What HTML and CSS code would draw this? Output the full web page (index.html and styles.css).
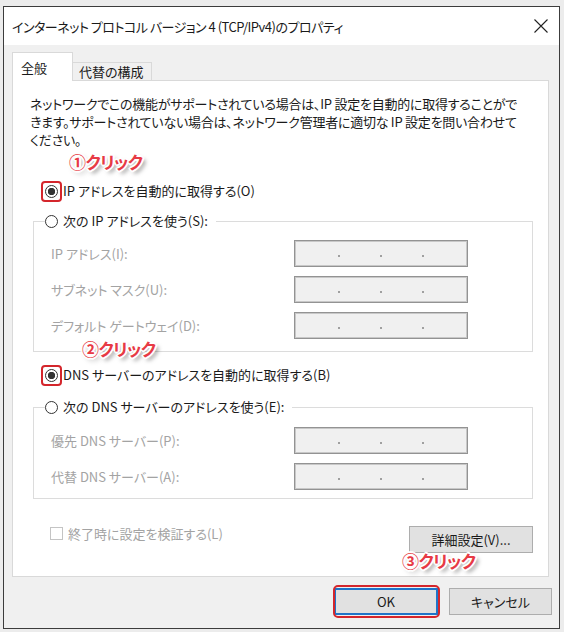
FILE: index.html
```html
<!DOCTYPE html>
<html lang="ja">
<head>
    <meta charset="UTF-8">
    <title>インターネット プロトコル バージョン 4 (TCP/IPv4)のプロパティ</title>
    <link rel="stylesheet" href="styles.css">
</head>
<body>
    <div class="window">
        <div class="titlebar">
            <span class="title">インターネット プロトコル バージョン 4 (TCP/IPv4)のプロパティ</span>
            <svg class="close" width="14" height="14" viewBox="0 0 14 14">
                <path d="M0.5 0.5 L13.5 13.5 M13.5 0.5 L0.5 13.5" stroke="#222" stroke-width="1.1" fill="none"/>
            </svg>
        </div>

        <div class="dialog">
            <div class="tabs">
                <div class="tab active">全般</div>
                <div class="tab">代替の構成</div>
            </div>

            <div class="panel">
                <p class="desc">ネットワークでこの機能がサポートされている場合は、IP 設定を自動的に取得することがで<br>きます。サポートされていない場合は、ネットワーク管理者に適切な IP 設定を問い合わせて<br>ください。</p>

                <label class="radio mark first"><span class="dot on"></span>IP アドレスを自動的に取得する(O)</label>

                <fieldset class="group group-ip">
                    <legend><span class="radio"><span class="dot"></span>次の IP アドレスを使う(S):</span></legend>
                    <div class="fields">
                        <div class="field"><span class="field-label">IP アドレス(I):</span><span class="ipbox"><i></i><i></i><i></i></span></div>
                        <div class="field"><span class="field-label">サブネット マスク(U):</span><span class="ipbox"><i></i><i></i><i></i></span></div>
                        <div class="field"><span class="field-label">デフォルト ゲートウェイ(D):</span><span class="ipbox"><i></i><i></i><i></i></span></div>
                    </div>
                </fieldset>

                <label class="radio mark second"><span class="dot on"></span>DNS サーバーのアドレスを自動的に取得する(B)</label>

                <fieldset class="group group-dns">
                    <legend><span class="radio"><span class="dot"></span>次の DNS サーバーのアドレスを使う(E):</span></legend>
                    <div class="fields">
                        <div class="field"><span class="field-label">優先 DNS サーバー(P):</span><span class="ipbox"><i></i><i></i><i></i></span></div>
                        <div class="field"><span class="field-label">代替 DNS サーバー(A):</span><span class="ipbox"><i></i><i></i><i></i></span></div>
                    </div>
                </fieldset>

                <div class="panel-foot">
                    <label class="check"><span class="box"></span>終了時に設定を検証する(L)</label>
                    <button class="btn btn-detail">詳細設定(V)...</button>
                </div>

                <!-- annotations drawn over the dialog -->
                <span class="note note-1">①クリック</span>
                <span class="note note-2">②クリック</span>
                <span class="note note-3">③クリック</span>
            </div>

            <div class="actions">
                <button class="btn btn-ok">OK</button>
                <button class="btn btn-cancel">キャンセル</button>
            </div>
        </div>
    </div>
</body>
</html>
```

FILE: styles.css
```css
* {
    box-sizing: border-box;
}

body {
    margin: 0;
    background: #ececec;
    font-family: "Noto Sans CJK JP", "Noto Sans", sans-serif;
    font-size: 13px;
    font-feature-settings: "palt" 1;
    color: #1a1a1a;
}

.window {
    width: 557px;
    height: 623px;
    margin: 6px 0 0 3px;
    border: 1px solid #3c3c3c;
    background: #f0f0f0;
    display: flex;
    flex-direction: column;
}

.titlebar {
    height: 38px;
    background: #fff;
    display: flex;
    align-items: center;
    justify-content: space-between;
    padding: 0 11px 0 8px;
}

.title {
    font-size: 13px;
    letter-spacing: -0.5px;
}

.dialog {
    flex: 1;
    padding: 7px 10px 0 8px;
}

.tabs {
    display: flex;
    align-items: flex-end;
    height: 28px;
}

.tab {
    height: 18px;
    width: 79px;
    padding-left: 6px;
    line-height: 17px;
    background: #f0f0f0;
    border: 1px solid #d9d9d9;
    border-left: none;
    border-bottom: none;
}

.tab.active {
    width: 61px;
    height: 29px;
    margin-bottom: -1px;
    padding: 6px 0 0 8px;
    background: #fff;
    border-left: 1px solid #d9d9d9;
    position: relative;
    z-index: 1;
}

.panel {
    position: relative;
    height: 497px;
    background: #fff;
    border: 1px solid #d9d9d9;
    padding: 14px 15px 0 17px;
}

.desc {
    margin: 0;
    line-height: 18px;
    letter-spacing: -0.25px;
    white-space: nowrap;
}

.radio {
    display: flex;
    align-items: center;
    height: 18px;
    line-height: 18px;
    white-space: nowrap;
}

.radio.mark {
    padding-left: 15px;
}

.radio.first {
    margin-top: 33px;
}

.radio.second {
    margin-top: 14px;
}

.dot {
    position: relative;
    width: 13px;
    height: 13px;
    margin-right: 5px;
    border: 1px solid #333;
    border-radius: 50%;
    background: #fff;
    flex: none;
}

.dot.on {
    background: radial-gradient(circle, #333 0 3.4px, #fff 4px);
}

.mark .dot::before {
    content: "";
    position: absolute;
    inset: -5px;
    border: 2px solid #d4262c;
    border-radius: 4px;
}

.group {
    margin: 12px 0 0 3px;
    padding: 0 0 12px 11px;
    border: 1px solid #dcdcdc;
    min-width: 0;
}

.group legend {
    padding: 0 8px 0 0;
}

.group-dns {
    margin-top: 14px;
    padding-bottom: 8px;
}

.fields {
    display: flex;
    flex-direction: column;
    gap: 9px;
    margin-top: 10px;
}

.group-dns .fields {
    margin-top: 11px;
}

.field {
    display: flex;
    align-items: center;
    height: 27px;
}

.field-label {
    width: 249px;
    padding-left: 6px;
    color: #a3a3a3;
    white-space: nowrap;
}

.ipbox {
    width: 174px;
    height: 27px;
    background: #f0f0f0;
    border: 1px solid #939393;
    box-shadow: inset 0 0 0 1px #c8c8c8;
    display: flex;
    justify-content: center;
    align-items: flex-end;
    gap: 40px;
    padding-bottom: 9px;
}

.ipbox i {
    width: 2px;
    height: 2px;
    background: #a0a0a0;
}

.panel-foot {
    display: flex;
    justify-content: space-between;
    align-items: flex-start;
    margin-top: 25px;
}

.check {
    display: flex;
    align-items: center;
    height: 18px;
    padding-left: 20px;
    color: #a3a3a3;
}

.check .box {
    width: 13px;
    height: 13px;
    margin-right: 5px;
    border: 1px solid #c4c4c4;
    background: #fff;
}

.btn {
    height: 27px;
    padding: 0;
    font-family: inherit;
    font-size: 13px;
    font-feature-settings: "palt" 1;
    color: #1a1a1a;
    background: #e1e1e1;
    border: 1px solid #adadad;
}

.btn-detail {
    width: 124px;
    margin-top: 2px;
}

.actions {
    display: flex;
    justify-content: flex-end;
    gap: 11px;
    margin: 11px -3px 0 0;
}

.btn-ok {
    position: relative;
    width: 104px;
    border: 2px solid #1f74c9;
}

.btn-ok::before {
    content: "";
    position: absolute;
    inset: -5px -4px -5px -3px;
    border: 2px solid #d4262c;
    border-radius: 5px;
}

.btn-cancel {
    width: 103px;
}

.note {
    position: absolute;
    line-height: 20px;
    font-size: 17px;
    font-weight: 700;
    letter-spacing: -0.6px;
    color: #e73a45;
    white-space: nowrap;
    text-shadow:
        1px 0 #fff, -1px 0 #fff, 0 1px #fff, 0 -1px #fff,
        2px 0 #fff, -2px 0 #fff, 0 2px #fff, 0 -2px #fff,
        1px 1px #fff, -1px -1px #fff, 1px -1px #fff, -1px 1px #fff,
        3px 3px 4px rgba(0, 0, 0, 0.5);
}

.note-1 {
    left: 56px;
    top: 71px;
}

.note-2 {
    left: 69px;
    top: 258px;
}

.note-3 {
    left: 389px;
    top: 470px;
}
```
